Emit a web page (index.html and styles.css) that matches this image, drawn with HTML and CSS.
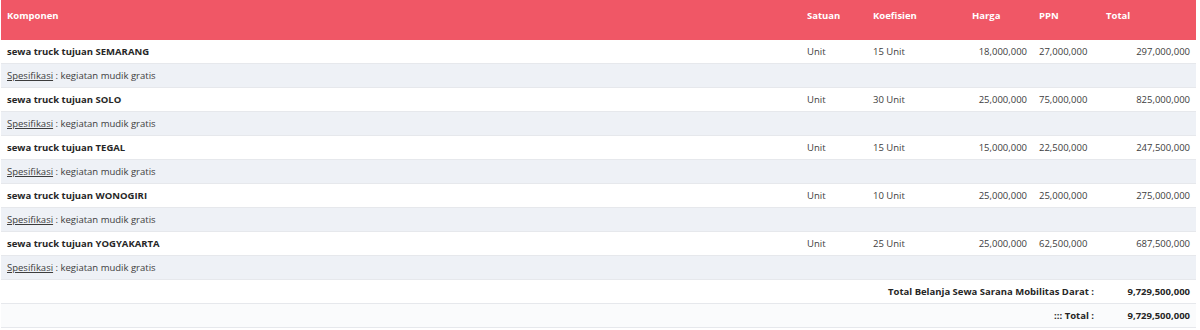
FILE: index.html
```html
<!DOCTYPE html>
<html>
<head>
<meta charset="utf-8">
<link rel="stylesheet" href="styles.css">
</head>
<body>
<table class="rab">
  <colgroup>
    <col class="c-komp"><col class="c-sat"><col class="c-koef"><col class="c-harga"><col class="c-ppn"><col class="c-total">
  </colgroup>
  <thead>
    <tr>
      <th>Komponen</th><th>Satuan</th><th>Koefisien</th><th>Harga</th><th>PPN</th><th>Total</th>
    </tr>
  </thead>
  <tbody>
    <tr class="item"><td class="name">sewa truck tujuan SEMARANG</td><td>Unit</td><td>15 Unit</td><td class="r">18,000,000</td><td>27,000,000</td><td class="r">297,000,000</td></tr>
    <tr class="spec"><td colspan="6"><span class="lbl">Spesifikasi</span> : kegiatan mudik gratis</td></tr>
    <tr class="item"><td class="name">sewa truck tujuan SOLO</td><td>Unit</td><td>30 Unit</td><td class="r">25,000,000</td><td>75,000,000</td><td class="r">825,000,000</td></tr>
    <tr class="spec"><td colspan="6"><span class="lbl">Spesifikasi</span> : kegiatan mudik gratis</td></tr>
    <tr class="item"><td class="name">sewa truck tujuan TEGAL</td><td>Unit</td><td>15 Unit</td><td class="r">15,000,000</td><td>22,500,000</td><td class="r">247,500,000</td></tr>
    <tr class="spec"><td colspan="6"><span class="lbl">Spesifikasi</span> : kegiatan mudik gratis</td></tr>
    <tr class="item"><td class="name">sewa truck tujuan WONOGIRI</td><td>Unit</td><td>10 Unit</td><td class="r">25,000,000</td><td>25,000,000</td><td class="r">275,000,000</td></tr>
    <tr class="spec"><td colspan="6"><span class="lbl">Spesifikasi</span> : kegiatan mudik gratis</td></tr>
    <tr class="item"><td class="name">sewa truck tujuan YOGYAKARTA</td><td>Unit</td><td>25 Unit</td><td class="r">25,000,000</td><td>62,500,000</td><td class="r">687,500,000</td></tr>
    <tr class="spec"><td colspan="6"><span class="lbl">Spesifikasi</span> : kegiatan mudik gratis</td></tr>
    <tr class="sum"><td colspan="5" class="r">Total Belanja Sewa Sarana Mobilitas Darat :</td><td class="r">9,729,500,000</td></tr>
    <tr class="sum grand"><td colspan="5" class="r">::: Total :</td><td class="r">9,729,500,000</td></tr>
  </tbody>
</table>
</body>
</html>
```

FILE: styles.css
```css
html, body {
  margin: 0;
  padding: 0;
  background: #ffffff;
}
body {
  padding: 0 4px 0 1px;
  font-family: "Open Sans", "Liberation Sans", sans-serif;
  font-size: 9.5px;
  color: #3d3d3d;
}
.rab {
  width: 100%;
  border-collapse: collapse;
  table-layout: fixed;
}
.c-komp { width: auto; }
.c-sat { width: 66px; }
.c-koef { width: 99px; }
.c-harga { width: 67px; }
.c-ppn { width: 67px; }
.c-total { width: 96px; }
.rab th {
  background: #f05766;
  color: #ffffff;
  font-weight: 700;
  text-align: left;
  padding: 10px 6px 17px;
  height: 12px;
  line-height: 12px;
  border-bottom: 1px solid #f05766;
}
.rab td {
  height: 23px;
  padding: 0 6px;
  line-height: 12px;
  border-bottom: 1px solid #e6e8ec;
  white-space: nowrap;
}
.rab td.r { text-align: right; }
.rab td.name { font-weight: 700; color: #262626; }
.spec td { background: #eef1f6; }
.spec .lbl { text-decoration: underline; }
.sum td { font-weight: 700; color: #262626; }
.grand td { background: #fafbfc; }
```
